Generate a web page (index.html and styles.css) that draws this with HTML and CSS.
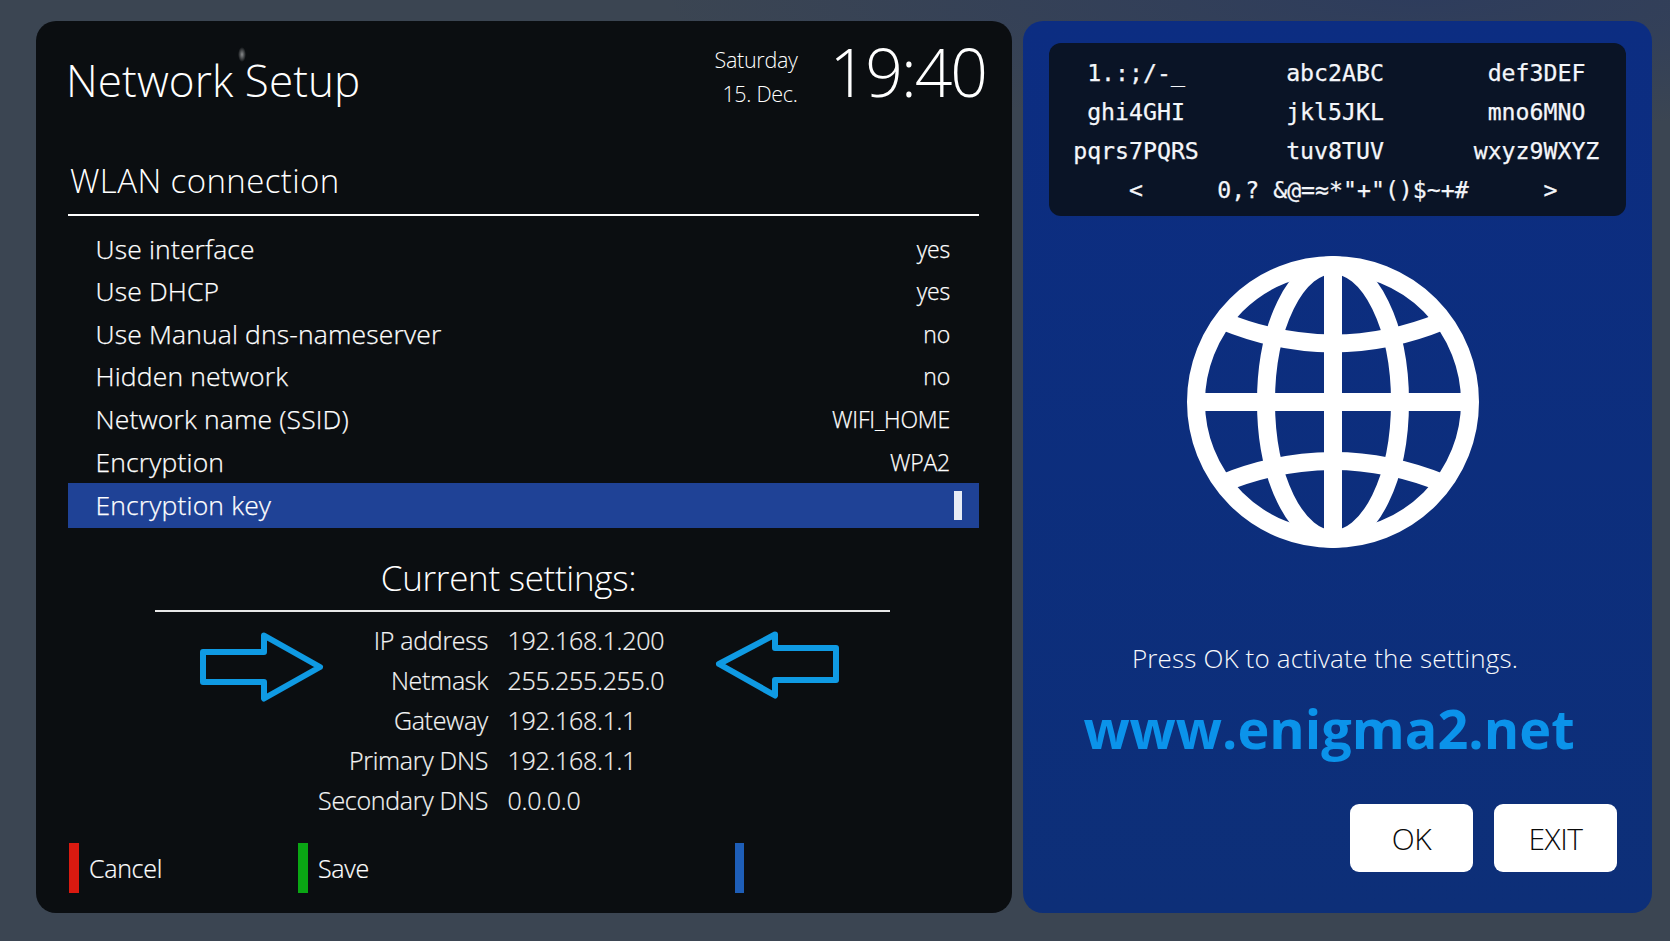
FILE: index.html
```html
<!DOCTYPE html>
<html lang="en">
<head>
<meta charset="utf-8">
<title>Network Setup</title>
<link rel="stylesheet" href="styles.css">
</head>
<body>
<main class="screen">
  <section class="setup">
    <header class="head">
      <h1 class="title">Network Setup</h1>
      <div class="date"><span>Saturday</span><span>15. Dec.</span></div>
      <div class="clock">19:40</div>
    </header>
    <h2 class="section">WLAN connection</h2>
    <ul class="options">
      <li class="option"><span>Use interface</span><span class="val">yes</span></li>
      <li class="option"><span>Use DHCP</span><span class="val">yes</span></li>
      <li class="option"><span>Use Manual dns-nameserver</span><span class="val">no</span></li>
      <li class="option"><span>Hidden network</span><span class="val">no</span></li>
      <li class="option"><span>Network name (SSID)</span><span class="val">WIFI_HOME</span></li>
      <li class="option"><span>Encryption</span><span class="val">WPA2</span></li>
      <li class="option selected"><span>Encryption key</span><span class="cursor"></span></li>
    </ul>
    <div class="current">
      <h2 class="current-title">Current settings:</h2>
      <dl class="table">
        <dt>IP address</dt><dd>192.168.1.200</dd>
        <dt>Netmask</dt><dd>255.255.255.0</dd>
        <dt>Gateway</dt><dd>192.168.1.1</dd>
        <dt>Primary DNS</dt><dd>192.168.1.1</dd>
        <dt>Secondary DNS</dt><dd>0.0.0.0</dd>
      </dl>
      <svg class="arrow arrow-right" viewBox="0 0 124 70" aria-hidden="true"><path d="M3 20H64V3.500L120 35 64 66.500V50H3Z"/></svg>
      <svg class="arrow arrow-left" viewBox="0 0 124 68" aria-hidden="true"><path d="M121 17H60V3.500L4 33 60 64.500V49H121Z"/></svg>
    </div>
    <footer class="keys">
      <div class="key key-cancel"><i class="bar bar-red"></i><span>Cancel</span></div>
      <div class="key key-save"><i class="bar bar-green"></i><span>Save</span></div>
      <div class="key"><i class="bar bar-blue"></i></div>
    </footer>
  </section>
  <aside class="side">
    <div class="pad">
      <div class="pad-grid">
        <span>1.:;/-_</span><span>abc2ABC</span><span>def3DEF</span>
        <span>ghi4GHI</span><span>jkl5JKL</span><span>mno6MNO</span>
        <span>pqrs7PQRS</span><span>tuv8TUV</span><span>wxyz9WXYZ</span>
      </div>
      <div class="pad-last">
        <span>&lt;</span><span>0,? &amp;@=≈*"+"()$~+#</span><span>&gt;</span>
      </div>
    </div>
    <svg class="globe" viewBox="0 0 300 300" aria-hidden="true">
      <circle cx="150" cy="150" r="137"/>
      <path d="M150 13V287M13 150H287"/>
      <ellipse cx="150" cy="150" rx="67" ry="137"/>
      <path d="M40 69Q150 114 260 69M38 232Q150 186 262 232"/>
    </svg>
    <p class="hint">Press OK to activate the settings.</p>
    <p class="site">www.enigma2.net</p>
    <div class="buttons">
      <button class="btn" type="button">OK</button>
      <button class="btn" type="button">EXIT</button>
    </div>
  </aside>
</main>
</body>
</html>
```
FILE: styles.css
```css
* { box-sizing: border-box; }
html, body { margin: 0; height: 100%; }
body {
  background: radial-gradient(ellipse 760px 130px at 85% 0, rgba(30, 50, 105, 0.45), rgba(30, 50, 105, 0)), #3b4552;
  font-family: "Open Sans", "Noto Sans", sans-serif;
  font-weight: 300;
  color: #fff;
  overflow: hidden;
}
.screen {
  display: flex;
  gap: 11px;
  padding: 21px 18px 28px 36px;
  height: 941px;
}
h1, h2, p, ul, dl, dd { margin: 0; padding: 0; font-weight: 300; }

.setup {
  width: 976px;
  background: #0b0e11;
  border-radius: 20px;
  padding: 0 33px 20px 32px;
  display: flex;
  flex-direction: column;
}
.head {
  height: 125px;
  display: flex;
  align-items: flex-start;
}
.title {
  position: relative;
  font-size: 44px;
  line-height: 60px;
  margin: 29px auto 0 -2px;
  letter-spacing: 0.1px;
}
.title::after {
  content: "";
  position: absolute;
  left: 172px;
  top: -3px;
  width: 8px;
  height: 15px;
  border-radius: 50%;
  background: radial-gradient(closest-side, #8a8c8e, rgba(138, 140, 142, 0));
}
.date {
  display: flex;
  flex-direction: column;
  align-items: flex-end;
  font-size: 21.500px;
  line-height: 34px;
  margin-top: 22px;
  letter-spacing: -0.3px;
}
.clock {
  font-size: 66px;
  line-height: 90px;
  margin: 5px -7px 0 32px;
  letter-spacing: -2px;
}
.section {
  height: 70px;
  font-size: 33px;
  line-height: 70px;
  padding-left: 2px;
  border-bottom: 2px solid #fff;
  letter-spacing: 0.4px;
}
.options {
  list-style: none;
  margin-top: 11.300px;
}
.option {
  height: 42.600px;
  display: flex;
  justify-content: space-between;
  align-items: center;
  padding: 0 29px 0 27.500px;
  font-size: 26.500px;
  letter-spacing: 0.15px;
  -webkit-text-stroke: 0.25px #fff;
}
.val { font-size: 23px; letter-spacing: -0.2px; }
.selected {
  height: 45px;
  background: #1f4296;
  padding-right: 17px;
}
.cursor { width: 8px; height: 29px; background: #e8ecf5; }

.current {
  position: relative;
}
.current-title {
  font-size: 35px;
  line-height: 50px;
  text-align: center;
  width: 735px;
  margin: 24.700px 0 0 87px;
  padding: 0 28px 7px 0;
  border-bottom: 2px solid #e8e8e8;
  letter-spacing: -0.3px;
}
.table {
  display: grid;
  grid-template-columns: 420px 1fr;
  column-gap: 19.500px;
  grid-auto-rows: 40px;
  margin-top: 8px;
  align-items: center;
  font-size: 25px;
  letter-spacing: -0.3px;
  color: #f4f4f4;
  -webkit-text-stroke: 0.2px #f4f4f4;
}
.table dt { text-align: right; }
.arrow {
  position: absolute;
  fill: none;
  stroke: #0f9ae3;
  stroke-width: 6;
  stroke-linejoin: round;
}
.arrow-right { left: 132px; top: 104px; width: 124px; height: 70px; }
.arrow-left { left: 647px; top: 103px; width: 124px; height: 68px; }

.keys {
  display: flex;
  margin-top: 23px;
  height: 50px;
  padding-left: 1px;
  font-size: 25px;
  letter-spacing: -0.3px;
  -webkit-text-stroke: 0.2px #fff;
}
.key { display: flex; align-items: center; gap: 10px; }
.key-cancel { width: 229px; }
.key-save { width: 437px; }
.bar { display: block; width: 10px; height: 50px; }
.bar-red { background: #da1a10; }
.bar-green { background: #0aa614; }
.bar-blue { background: #1e5eb8; width: 9px; }

.side {
  width: 629px;
  background: linear-gradient(180deg, #0c2d82 0%, #0d2f78 100%);
  border-radius: 20px;
  padding: 22px 35px 41px 26px;
  display: flex;
  flex-direction: column;
}
.pad {
  width: 577px;
  height: 173px;
  background: #0a1426;
  border-radius: 12px;
  padding-top: 10px;
  font-family: "DejaVu Sans Mono", monospace;
  font-size: 23.200px;
  font-weight: 400;
  line-height: 39px;
  text-align: center;
  color: #f4f6fa;
  -webkit-text-stroke: 0.25px #f4f6fa;
}
.pad-grid {
  display: grid;
  grid-template-columns: 174px 224px 179px;
}
.pad-last {
  display: grid;
  grid-template-columns: 174px 240px 163px;
  white-space: nowrap;
}
.pad-last span { justify-self: center; }
.pad-last span:last-child { padding-left: 12px; }
.globe {
  width: 300px;
  height: 300px;
  margin: 36px 0 0 134px;
  fill: none;
  stroke: #fff;
  stroke-width: 18;
}
.hint {
  margin: 86px -1px 0 -17px;
  font-size: 26px;
  line-height: 40px;
  text-align: center;
  color: #f8f9fb;
  letter-spacing: 0.15px;
}
.site {
  margin: 12px 0 0 -8px;
  font-weight: 700;
  font-size: 54px;
  line-height: 76px;
  text-align: center;
  color: #0b93ea;
}
.buttons {
  display: flex;
  justify-content: flex-end;
  gap: 21px;
  margin-top: auto;
}
.btn {
  width: 123px;
  height: 68px;
  border: 0;
  border-radius: 9px;
  background: #fff;
  color: #0a0a0a;
  font: 300 30px "Open Sans", "Noto Sans", sans-serif;
  letter-spacing: -0.5px;
}
```
